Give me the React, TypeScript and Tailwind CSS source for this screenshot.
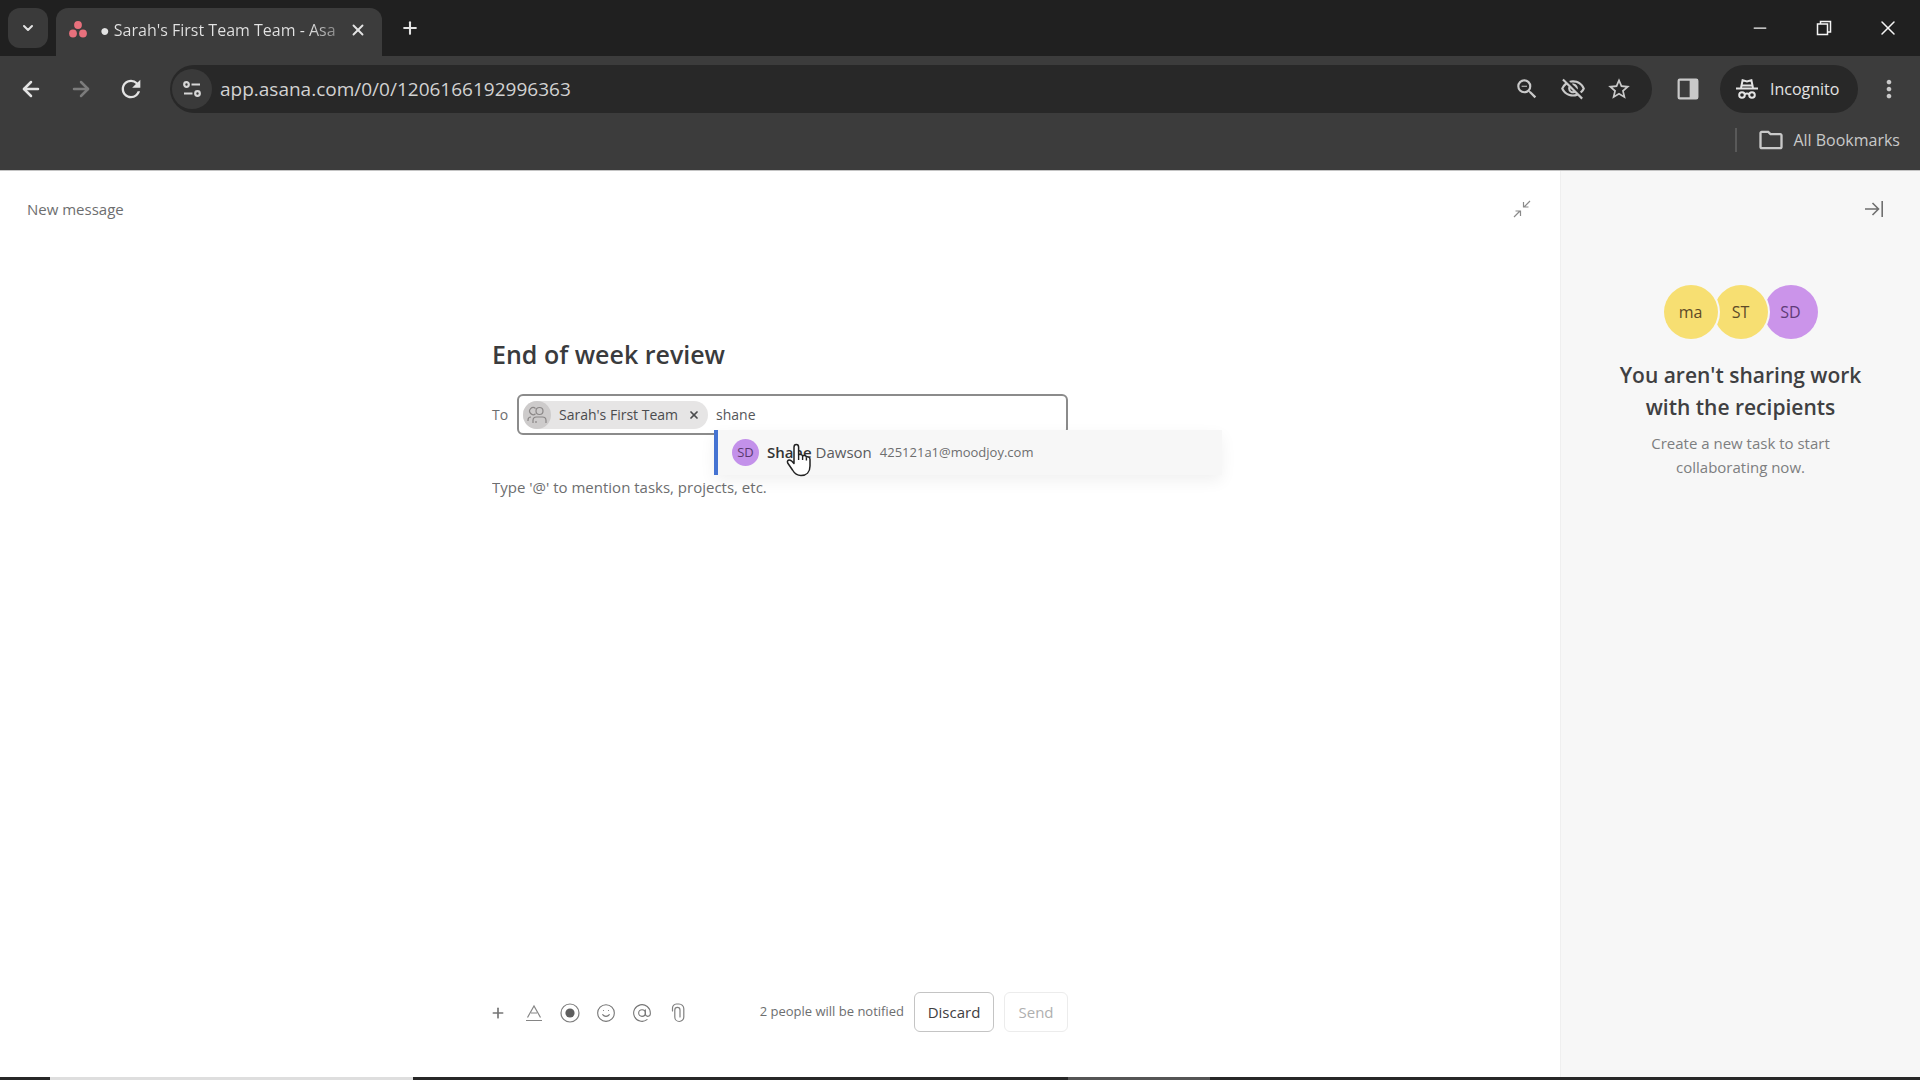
import React from "react";
import {
  ArrowLeft, ArrowRight, AtSign, ChevronDown, Minus, Plus, Smile, X,
} from "lucide-react";
import {
  MdOutlineFolder, MdRefresh, MdStarOutline, MdOutlineVisibilityOff, MdZoomOut, MdMoreVert,
} from "react-icons/md";

function AsanaLogo() {
  return (
    <svg className="size-5 shrink-0" viewBox="0 0 20 20" fill="#e8707c" aria-hidden="true">
      <circle cx="10" cy="5" r="3.9" />
      <circle cx="5" cy="13.500" r="3.9" />
      <circle cx="15" cy="13.500" r="3.9" />
    </svg>
  );
}

function SiteSettingsIcon() {
  return (
    <svg className="size-5" viewBox="0 0 20 20" fill="none" stroke="#d6d6d6" strokeWidth="2.200" aria-hidden="true">
      <circle cx="4.500" cy="5.500" r="2.300" />
      <path d="M9.500 5.500H18M2 14.500h8.500" />
      <circle cx="15.500" cy="14.500" r="2.300" />
    </svg>
  );
}

function SidePanelIcon() {
  return (
    <svg className="size-[22px]" viewBox="0 0 20 20" aria-hidden="true">
      <rect x="1.500" y="1.500" width="17" height="17" rx="1" fill="none" stroke="#c9c9c9" strokeWidth="2" />
      <rect x="11.500" y="1.500" width="7.500" height="17" fill="#c9c9c9" />
    </svg>
  );
}

function IncognitoIcon() {
  return (
    <svg className="h-5 w-[22px]" viewBox="0 0 22 20" fill="none" stroke="#e4e4e4" strokeWidth="2" aria-hidden="true">
      <path d="M0 9.500h22" />
      <path d="M5 9 6.600 1.200 11 2.400l4.400-1.200L17 9" />
      <path d="M6 6.500h10" />
      <circle cx="6" cy="16" r="2.800" />
      <circle cx="16" cy="16" r="2.800" />
      <path d="M8.600 15.200c1.500-.8 3.300-.8 4.800 0" />
    </svg>
  );
}

function RestoreIcon() {
  return (
    <svg className="size-4" viewBox="0 0 16 16" fill="none" stroke="#f4f4f4" strokeWidth="1.500" aria-hidden="true">
      <rect x="1.500" y="4" width="10" height="10.500" />
      <path d="M4.500 4V1.500h10v10.500h-3" />
    </svg>
  );
}

function ShrinkIcon() {
  return (
    <svg className="size-[18px]" viewBox="0 0 18 18" fill="none" stroke="#8a8a8a" strokeWidth="1.200" aria-hidden="true">
      <path d="M17 1l-6 6M10.500 2V7H15.500M1 17l6-6M7.500 16V11H2.500" />
    </svg>
  );
}

function CollapseIcon() {
  return (
    <svg className="size-5" viewBox="0 0 20 20" fill="none" stroke="#6f6f6f" strokeWidth="1.600" aria-hidden="true">
      <path d="M1 10h13M8.500 4l6 6-6 6M18.200 2v16" />
    </svg>
  );
}

function TeamIcon() {
  return (
    <svg className="size-5" viewBox="0 0 20 20" fill="none" stroke="#8a8787" strokeWidth="1.200" aria-hidden="true">
      <path d="M8.500 8.700A3.500 3.500 0 1 1 8.500 3.500" />
      <circle cx="12.500" cy="6" r="3.500" />
      <path d="M1 16v-1c0-1.700 1-3 3-3M6 18v-2.500c0-2 1.500-3.500 3.500-3.500h6c2 0 3.500 1.500 3.500 3.500V18M9 18v-2" />
    </svg>
  );
}

function FormatIcon() {
  return (
    <svg className="size-[18px]" viewBox="0 0 18 18" fill="none" stroke="#858585" strokeWidth="1.200" aria-hidden="true">
      <path d="M2.500 13.500 9 2l6.500 11.500M6 9h6M1 16.500h16" />
    </svg>
  );
}

function RecordIcon() {
  return (
    <svg className="size-5" viewBox="0 0 20 20" aria-hidden="true">
      <circle cx="10" cy="10" r="9" fill="none" stroke="#7f7f7f" strokeWidth="1.200" />
      <circle cx="10" cy="10" r="4.600" fill="#5f5f5f" />
    </svg>
  );
}

function ClipIcon() {
  return (
    <svg className="size-5" viewBox="0 0 20 20" fill="none" stroke="#808080" strokeWidth="1.200" strokeLinecap="round" aria-hidden="true">
      <path d="M4.500 8V5.200a4 4 0 0 1 3.800-4.200h2.700a4.800 4.800 0 0 1 4.800 4.800V14a4.500 4.500 0 0 1-9 0V7a2.600 2.600 0 0 1 5.200 0v7" />
    </svg>
  );
}

function HandPointer() {
  return (
    <svg className="pointer-events-none absolute top-[13px] left-[72px] h-[34px] w-[26px]" viewBox="0 0 26 34" aria-hidden="true">
      <path
        d="M8 20V4.200C8 2.600 9 1.500 10.300 1.500s2.300 1.100 2.300 2.700V12c.5-1 3.600-.9 4 .8 1-.8 3.500-.4 3.800 1.200 1.400-.6 3.600.2 3.600 2.300V23c0 6-3.500 9.500-9 9.500-4.500 0-6.500-2-8.500-5.500L1.700 20c-.8-1.700.2-3 1.500-3 1.800 0 3.300 1.500 4.800 3.500z"
        fill="#fff" stroke="#222" strokeWidth="1.500" strokeLinejoin="round"
      />
      <path d="M12.600 12v5M16.600 13v4M20.400 14.500v3" stroke="#222" strokeWidth="1.400" />
    </svg>
  );
}

function BrowserChrome() {
  return (
    <header className="bg-[#3c3c3c] text-[#e3e3e3]">
      <div className="flex h-14 items-end justify-between bg-[#202020]">
        <div className="flex items-end">
          <button aria-label="Search tabs" className="mb-2 ml-2 flex size-10 items-center justify-center rounded-xl bg-[#3a3a3a]">
            <ChevronDown className="size-4" strokeWidth={3} />
          </button>
          <div className="ml-2 flex h-12 w-[326px] items-center rounded-t-xl bg-[#3c3c3c] px-3 pb-1">
            <AsanaLogo />
            <span className="ml-3 flex-1 bg-linear-to-r from-[#e3e3e3] from-85% to-[#6a6a6a] bg-clip-text text-base leading-6 whitespace-nowrap text-transparent">
              ● Sarah's First Team Team - Asa
            </span>
            <button aria-label="Close tab" className="flex size-6 items-center justify-center">
              <X className="size-[18px]" strokeWidth={2.500} />
            </button>
          </div>
          <button aria-label="New tab" className="mb-4 ml-4 flex size-6 items-center justify-center">
            <Plus className="size-5" strokeWidth={2.500} />
          </button>
        </div>
        <div className="flex h-14 text-[#f4f4f4]">
          <button aria-label="Minimize" className="flex w-16 items-center justify-center"><Minus className="size-5" strokeWidth={1.500} /></button>
          <button aria-label="Restore" className="flex w-16 items-center justify-center"><RestoreIcon /></button>
          <button aria-label="Close window" className="flex w-16 items-center justify-center"><X className="size-6" strokeWidth={1.500} /></button>
        </div>
      </div>
      <div className="flex h-[66px] items-center px-4">
        <div className="flex items-center gap-5">
          <button aria-label="Back" className="flex size-[30px] items-center justify-center"><ArrowLeft className="size-6" strokeWidth={2.500} /></button>
          <button aria-label="Forward" className="flex size-[30px] items-center justify-center text-[#7c7c7c]"><ArrowRight className="size-6" strokeWidth={2.500} /></button>
          <button aria-label="Reload" className="flex size-[30px] items-center justify-center"><MdRefresh className="size-7" /></button>
        </div>
        <div className="ml-6 flex h-12 flex-1 items-center rounded-full bg-[#282828] pr-5 pl-0.5">
          <button aria-label="Site information" className="flex size-10 items-center justify-center rounded-full bg-[#3a3a3a]"><SiteSettingsIcon /></button>
          <input aria-label="Address" defaultValue="app.asana.com/0/0/1206166192996363" className="ml-2 min-w-0 flex-1 bg-transparent text-[19px] leading-7 text-[#d2d2d2] outline-none" />
          <div className="flex items-center gap-5 text-[#c9c9c9]">
            <button aria-label="Zoom"><MdZoomOut className="size-[26px]" /></button>
            <button aria-label="Third-party cookies blocked"><MdOutlineVisibilityOff className="size-[26px]" /></button>
            <button aria-label="Bookmark this tab"><MdStarOutline className="size-[26px]" /></button>
          </div>
        </div>
        <button aria-label="Side panel" className="mr-5 ml-6 flex size-6 items-center justify-center"><SidePanelIcon /></button>
        <button className="flex h-12 w-[138px] items-center gap-3 rounded-full bg-[#282828] pl-4 text-base">
          <IncognitoIcon />
          Incognito
        </button>
        <button aria-label="Menu" className="ml-4 flex size-[30px] items-center justify-center text-[#c9c9c9]"><MdMoreVert className="size-7" /></button>
      </div>
      <div className="flex h-[49px] items-start justify-end border-b border-[#c4c4c4] pt-1 pr-5">
        <div className="flex items-center text-[#c9c9c9]">
          <span className="mr-5 h-6 w-0.5 bg-[#595959]" />
          <button className="flex items-center gap-2 text-base leading-7"><MdOutlineFolder className="size-7" />All Bookmarks</button>
        </div>
      </div>
    </header>
  );
}

const toolButton = "flex size-5 items-center justify-center";

function Composer() {
  return (
    <main className="flex flex-1 flex-col bg-white text-[#6d6e6f]">
      <div className="flex h-[76px] items-center justify-between px-[27px]">
        <h1 className="text-[15px] leading-6">New message</h1>
        <button aria-label="Shrink message" className="mr-0.5"><ShrinkIcon /></button>
      </div>
      <div className="mx-auto flex w-full max-w-[576px] flex-1 flex-col pt-[87px] pb-[45px]">
        <input aria-label="Subject" defaultValue="End of week review" className="h-10 w-full text-[25px] font-semibold text-[#3a3b3d] outline-none" />
        <div className="mt-5 flex items-center">
          <label htmlFor="to" className="w-[25px] shrink-0 text-sm">To</label>
          <div className="relative flex h-[41px] flex-1 items-center rounded-md border-2 border-[#8b8b8b] pl-1">
            <span className="flex h-7 shrink-0 items-center rounded-full bg-[#e6e5e5] pr-2 text-sm whitespace-nowrap text-[#4b4c4e]">
              <span className="flex size-7 items-center justify-center rounded-full bg-[#cdcbcb]"><TeamIcon /></span>
              <span className="mr-2.5 ml-2">Sarah's First Team</span>
              <button aria-label="Remove Sarah's First Team"><X className="size-3" strokeWidth={3.500} /></button>
            </span>
            <input id="to" defaultValue="shane" className="ml-2 w-full min-w-0 flex-1 text-sm text-[#55565a] outline-none" />
            <div role="listbox" aria-label="People" className="absolute top-[34px] left-[195px] w-[508px] shadow-[0_6px_16px_rgba(0,0,0,0.06)]">
              <div role="option" aria-selected="true" className="flex h-[45px] items-center border-l-4 border-[#4573d2] bg-[#f7f7f7] pl-[14px] text-[15px] whitespace-nowrap">
                <span className="flex size-[27px] items-center justify-center rounded-full bg-[#c391ea] text-[13px] text-[#5a3a70]">SD</span>
                <span className="ml-2 text-[#5a5b5d]"><b className="font-semibold text-[#333]">Shane</b> Dawson</span>
                <span className="ml-2 text-[13px]">425121a1@moodjoy.com</span>
              </div>
              <HandPointer />
            </div>
          </div>
        </div>
        <textarea aria-label="Message" placeholder="Type '@' to mention tasks, projects, etc." className="mt-10 w-full flex-1 resize-none text-[15px] leading-6 outline-none placeholder:text-[#6d6e6f]" />
        <div className="flex h-10 items-center justify-between">
          <div className="-ml-1 flex items-center gap-4 pt-0.5 text-[#757575]">
            <button aria-label="Insert" className={toolButton}><Plus className="size-4" strokeWidth={2.500} /></button>
            <button aria-label="Formatting" className={toolButton}><FormatIcon /></button>
            <button aria-label="Record video" className={toolButton}><RecordIcon /></button>
            <button aria-label="Emoji" className={toolButton}><Smile className="size-[22px]" strokeWidth={1.300} /></button>
            <button aria-label="Mention" className={toolButton}><AtSign className="size-[22px]" strokeWidth={1.300} /></button>
            <button aria-label="Attach" className={toolButton}><ClipIcon /></button>
          </div>
          <div className="flex items-center text-[15px]">
            <span className="mr-2.5 text-[13px]">2 people will be notified</span>
            <button className="h-10 w-20 rounded-md border border-[#c4c4c4] text-[#3f4042]">Discard</button>
            <button disabled className="ml-2.5 h-10 w-16 rounded-md border border-[#ececec] text-[#afafaf]">Send</button>
          </div>
        </div>
      </div>
    </main>
  );
}

function SidePanel() {
  return (
    <aside className="flex w-[360px] shrink-0 flex-col border-l border-[#efefef] bg-[#f7f7f7]">
      <div className="flex h-[76px] items-center justify-end pr-9"><button aria-label="Hide panel"><CollapseIcon /></button></div>
      <div className="mx-auto mt-[38px] flex w-[260px] flex-col items-center text-center">
        <div className="flex text-base text-[#5d4a28]">
          <span className="z-20 flex size-[54px] items-center justify-center rounded-full bg-[#f7df72] ring-2 ring-[#f7f7f7]">ma</span>
          <span className="z-10 -ml-1 flex size-[54px] items-center justify-center rounded-full bg-[#f7df72] ring-2 ring-[#f7f7f7]">ST</span>
          <span className="-ml-1 flex size-[54px] items-center justify-center rounded-full bg-[#cb94ea] text-[#5f3c78]">SD</span>
        </div>
        <h2 className="mt-5 text-[21px] leading-8 font-semibold text-[#3f4042]">You aren't sharing work with the recipients</h2>
        <p className="mt-2 w-[200px] text-[15px] leading-6 text-[#7d7e80]">Create a new task to start collaborating now.</p>
      </div>
    </aside>
  );
}

export default function App() {
  return (
    <div className="flex min-h-screen flex-col overflow-x-hidden font-['Open_Sans',sans-serif]">
      <BrowserChrome />
      <div className="flex flex-1"><Composer /><SidePanel /></div>
      <footer className="flex h-[3px] bg-[#272727]">
        <span className="ml-[50px] w-[363px] bg-[#dedede]" />
        <span className="ml-[655px] w-[142px] bg-[#555]" />
      </footer>
    </div>
  );
}
